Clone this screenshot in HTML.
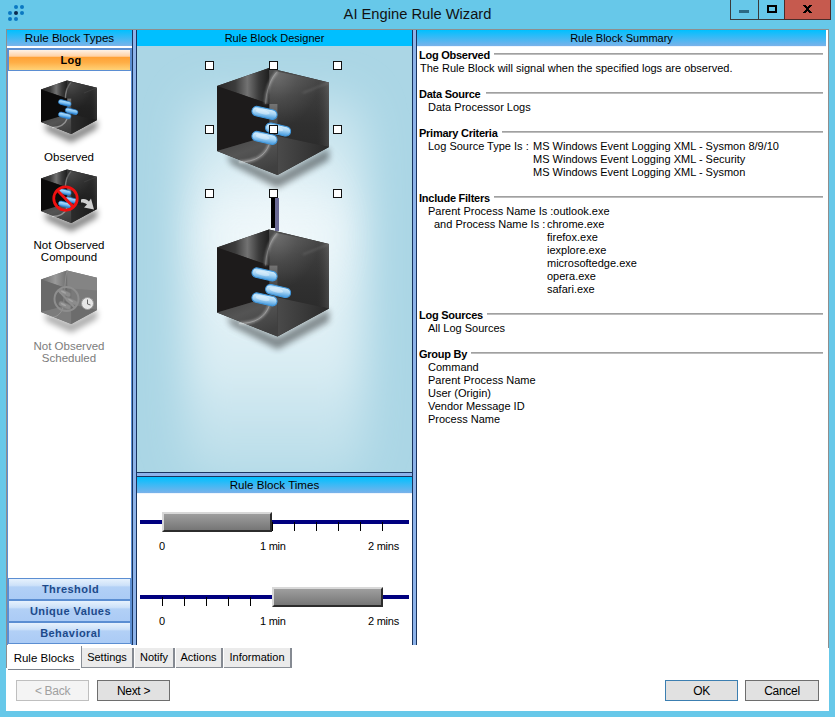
<!DOCTYPE html>
<html><head><meta charset="utf-8">
<style>
*{margin:0;padding:0;box-sizing:border-box}
html,body{width:835px;height:717px;overflow:hidden}
body{position:relative;background:#67c8e9;font-family:"Liberation Sans",sans-serif;color:#000}
.a{position:absolute}
.dot{position:absolute;width:4px;height:4px;border-radius:50%;background:#0a78c2}
#title{left:0;width:835px;top:5px;text-align:center;font-size:14.7px;color:#111;line-height:18px;padding-left:0px}
.cap{position:absolute;top:-1px;height:21px;border:1px solid #3a3a3a}
#client{left:6px;top:29px;width:823px;height:682px;background:#fff}
.hdr{position:absolute;height:16px;font-size:11px;line-height:16px;text-align:center;color:#000;background:linear-gradient(#00c0ff,#7ab2ea)}
.split{position:absolute;background:#8db3ea}
.bbtn{position:absolute;left:8px;width:123px;height:22px;border:1px solid #5b8ed2;background:linear-gradient(#e6f1fd 0%,#cde1f9 32%,#b2d0f6 40%,#abcbf5 100%);font-weight:bold;font-size:11px;line-height:20px;text-align:center;color:#1d4a8a;letter-spacing:0.45px;padding-left:2px}
.lbl{position:absolute;width:124px;left:7px;text-align:center;font-size:11.5px;line-height:12.3px;color:#000}
.hdl{position:absolute;width:9px;height:9px;border:1.5px solid #111;background:#fff}
.sum{position:absolute;left:420px;font-size:11px;line-height:13px;white-space:pre;color:#000}
.sh{position:absolute;left:419px;font-size:11px;line-height:13px;font-weight:bold;letter-spacing:-0.25px;white-space:pre}
.rule{position:absolute;height:2px;border-top:1px solid #a0a0a0;border-bottom:1px solid #bdbdbd}
.tab{position:absolute;top:648px;height:20px;background:#ebebeb;font-size:11px;line-height:19px;text-align:center;border-right:2px solid #858a92;border-bottom:1px solid #8a8f96}
.btn{position:absolute;top:680px;height:21px;font-size:12px;line-height:20px;text-align:center;background:#e1e1e1;border:1px solid #6e6e6e;letter-spacing:-0.3px}
.tl{position:absolute;font-size:11px;line-height:13px;color:#000;letter-spacing:-0.25px}
.nav{position:absolute;left:140px;width:269px;height:4px;background:#00007f}
.tick{position:absolute;width:1px;background:#000}
.gbar{position:absolute;height:20px;background:linear-gradient(#9e9e9e,#767676);border-top:2px solid #d8d8d8;border-left:2px solid #d8d8d8;border-bottom:2px solid #2c2c2c;border-right:2px solid #2c2c2c}
</style></head><body>
<!-- title bar icon -->
<div class="dot" style="left:14px;top:5px"></div>
<div class="dot" style="left:20px;top:5px"></div>
<div class="dot" style="left:8px;top:11px"></div>
<div class="dot" style="left:14px;top:11px;background:#0c2a4c"></div>
<div class="dot" style="left:20px;top:11px"></div>
<div class="dot" style="left:8px;top:17px"></div>
<div class="dot" style="left:14px;top:17px"></div>
<div id="title" class="a">AI Engine Rule Wizard</div>
<div class="cap" style="left:730px;width:29px"><div class="a" style="left:8px;top:10px;width:10px;height:3px;background:#2c6a84"></div></div>
<div class="cap" style="left:758px;width:27px"><div class="a" style="left:8px;top:5px;width:10px;height:8px;border:2px solid #000"></div></div>
<div class="cap" style="left:784px;width:47px;background:#c65a4e;border-color:#4a2c2a"></div>
<svg class="a" style="left:803px;top:5px" width="9" height="8" shape-rendering="crispEdges" fill="#000"><rect x="0" y="0" width="3" height="1"/><rect x="6" y="0" width="3" height="1"/><rect x="1" y="1" width="3" height="1"/><rect x="5" y="1" width="3" height="1"/><rect x="2" y="2" width="5" height="1"/><rect x="3" y="3" width="3" height="1"/><rect x="3" y="4" width="3" height="1"/><rect x="2" y="5" width="5" height="1"/><rect x="1" y="6" width="3" height="1"/><rect x="5" y="6" width="3" height="1"/><rect x="0" y="7" width="3" height="1"/><rect x="6" y="7" width="3" height="1"/></svg>

<div id="client" class="a"></div>
<!-- tab page border -->
<div class="a" style="left:6px;top:29px;width:823px;height:1px;background:#8e8e8e"></div>
<div class="a" style="left:6px;top:29px;width:1px;height:639px;background:#8e8e8e"></div>
<div class="a" style="left:828px;top:29px;width:1px;height:619px;background:#8e8e8e"></div>

<!-- LEFT PANEL -->
<div class="hdr" style="left:7px;top:30px;width:125px;font-size:11.6px">Rule Block Types</div>
<div class="a" style="left:7px;top:48px;width:125px;height:597px;border:1px solid #5b8ed2;border-bottom:none;background:#fff"></div>
<div class="a" style="left:8px;top:49px;width:123px;height:22px;border:1px solid #5b8ed2;background:linear-gradient(#fff3e6 0%,#ffd2a6 31%,#ffa236 37%,#ffae46 62%,#ffd277 100%);font-weight:bold;font-size:11px;line-height:20px;text-align:center;padding-left:3px;letter-spacing:0.3px">Log</div>
<div class="lbl" style="top:151px">Observed</div>
<div class="lbl" style="top:239px">Not Observed<br>Compound</div>
<div class="lbl" style="top:340px;color:#7c7c7c">Not Observed<br>Scheduled</div>
<div class="bbtn" style="top:578px">Threshold</div>
<div class="bbtn" style="top:600px">Unique Values</div>
<div class="bbtn" style="top:622px">Behavioral</div>

<!-- splitter left -->
<div class="split" style="left:132px;top:30px;width:5px;height:615px;border-left:1px solid #1a3560;border-right:1px solid #1a3560"></div>

<!-- DESIGNER -->
<svg class="a" style="left:137px;top:46px" width="275" height="426"><defs><filter id="bgblur" x="-50%" y="-50%" width="200%" height="200%"><feGaussianBlur stdDeviation="28"/></filter><filter id="bgblur2" x="-50%" y="-50%" width="200%" height="200%"><feGaussianBlur stdDeviation="20"/></filter></defs>
<rect width="275" height="426" fill="#abd6e5"/>
<linearGradient id="glowG" x1="0" y1="0" x2="0" y2="1"><stop offset="0" stop-color="#eaf5f9" stop-opacity="0.3"/><stop offset="0.35" stop-color="#eef7fa" stop-opacity="0.95"/><stop offset="0.7" stop-color="#e6f3f7" stop-opacity="0.8"/><stop offset="1" stop-color="#d4eaf1" stop-opacity="0.3"/></linearGradient>
<rect x="48" y="45" width="180" height="390" rx="30" fill="url(#glowG)" filter="url(#bgblur2)"/>
<ellipse cx="136" cy="190" rx="50" ry="70" fill="#fff" opacity="0.35" filter="url(#bgblur)"/>
</svg>
<div class="hdr" style="left:137px;top:30px;width:275px;background:#00bfff">Rule Block Designer</div>
<div class="split" style="left:137px;top:472px;width:275px;height:5px;border-top:1px solid #1a3560;border-bottom:1px solid #1a3560"></div>
<div class="hdr" style="left:137px;top:477px;width:275px;font-size:11.6px">Rule Block Times</div>

<svg class="a" style="left:0;top:0" width="835" height="717" viewBox="0 0 835 717">
<defs>
<linearGradient id="gRoofL" x1="0" y1="0" x2="1" y2="0">
 <stop offset="0" stop-color="#2a2828"/><stop offset="0.35" stop-color="#3c3c3c"/><stop offset="0.58" stop-color="#727272"/><stop offset="0.8" stop-color="#3a3a3a"/><stop offset="1" stop-color="#1e1e1e"/>
</linearGradient>
<linearGradient id="gRight" x1="0" y1="0" x2="0" y2="1">
 <stop offset="0" stop-color="#4e4e4e"/><stop offset="0.35" stop-color="#3c3c3c"/><stop offset="0.7" stop-color="#303030"/><stop offset="1" stop-color="#2c2c2c"/>
</linearGradient>
<linearGradient id="gRightH" x1="0" y1="0" x2="1" y2="0">
 <stop offset="0" stop-color="#000" stop-opacity="0"/><stop offset="0.75" stop-color="#000" stop-opacity="0"/><stop offset="1" stop-color="#fff" stop-opacity="0.12"/>
</linearGradient>
<linearGradient id="gBand" x1="0" y1="0" x2="0" y2="1">
 <stop offset="0" stop-color="#747474"/><stop offset="0.5" stop-color="#505050"/><stop offset="1" stop-color="#3a3a3a"/>
</linearGradient>
<linearGradient id="gFloorL" x1="0" y1="0" x2="0.6" y2="1">
 <stop offset="0" stop-color="#404040"/><stop offset="0.5" stop-color="#545454"/><stop offset="1" stop-color="#404040"/>
</linearGradient>
<linearGradient id="gFloorR" x1="0" y1="0" x2="1" y2="0">
 <stop offset="0" stop-color="#4a4a4a"/><stop offset="1" stop-color="#2a2a2a"/>
</linearGradient>
<linearGradient id="gPill" x1="0" y1="0" x2="0" y2="1">
 <stop offset="0" stop-color="#c2e2fa"/><stop offset="0.45" stop-color="#8cc6f2"/><stop offset="1" stop-color="#3b93dc"/>
</linearGradient>
<radialGradient id="gShadow" cx="0.5" cy="0.5" r="0.5">
 <stop offset="0" stop-color="#000" stop-opacity="0.45"/><stop offset="0.6" stop-color="#000" stop-opacity="0.2"/><stop offset="1" stop-color="#000" stop-opacity="0"/>
</radialGradient>
<filter id="gray"><feColorMatrix type="matrix" values="0.33 0.33 0.33 0 0.28  0.33 0.33 0.33 0 0.28  0.33 0.33 0.33 0 0.28  0 0 0 1 0"/></filter>
<filter id="blur3" x="-30%" y="-30%" width="160%" height="160%"><feGaussianBlur stdDeviation="3"/></filter>
<filter id="blur1" x="-30%" y="-30%" width="160%" height="160%"><feGaussianBlur stdDeviation="1"/></filter>
<linearGradient id="gTopHi" x1="0" y1="0" x2="0" y2="1">
 <stop offset="0" stop-color="#fff" stop-opacity="0.16"/><stop offset="0.45" stop-color="#fff" stop-opacity="0.03"/><stop offset="1" stop-color="#fff" stop-opacity="0"/>
</linearGradient>
<linearGradient id="gPill2" x1="0" y1="0" x2="0" y2="1">
 <stop offset="0" stop-color="#d2ebfc"/><stop offset="0.5" stop-color="#9ccff4"/><stop offset="1" stop-color="#4a9fe0"/>
</linearGradient>
<linearGradient id="gRoofR" x1="0" y1="0" x2="1" y2="0.3">
 <stop offset="0" stop-color="#505050"/><stop offset="0.5" stop-color="#434343"/><stop offset="1" stop-color="#4c4c4c"/>
</linearGradient>
<linearGradient id="gWallR" x1="0" y1="0" x2="1" y2="0">
 <stop offset="0" stop-color="#3c3c3c"/><stop offset="0.6" stop-color="#303030"/><stop offset="1" stop-color="#383838"/>
</linearGradient>
<filter id="blur6" x="-50%" y="-50%" width="200%" height="200%"><feGaussianBlur stdDeviation="6"/></filter>
<g id="shBig"><polygon points="10,86 60.5,108 112,80 112,92 60.5,120 14,96" fill="#000" opacity="0.42" filter="url(#blur3)"/></g>
<g id="shSmall"><polygon points="8,84 60.5,106 112,78 112,96 60.5,124 10,100" fill="#000" opacity="0.5" filter="url(#blur6)"/></g>
<linearGradient id="gPillS" x1="0" y1="0" x2="0.25" y2="1">
 <stop offset="0" stop-color="#3f95e0"/><stop offset="0.3" stop-color="#a8d8f8"/><stop offset="0.65" stop-color="#78bcf0"/><stop offset="1" stop-color="#2f88d8"/>
</linearGradient>
<g id="pillS"><rect x="-12.75" y="-4.75" width="25.5" height="9.5" rx="4.75" fill="url(#gPillS)" stroke="#2f88d8" stroke-width="1.2"/></g>
<g id="pillsS">
 <use href="#pillS" transform="translate(47.5,44.9) rotate(15)"/>
 <use href="#pillS" transform="translate(61.1,61.5) rotate(15)"/>
 <use href="#pillS" transform="translate(47.5,69.9) rotate(15)"/>
</g>
<radialGradient id="gSheen" cx="0.15" cy="0.05" r="0.7"><stop offset="0" stop-color="#fff" stop-opacity="0.2"/><stop offset="0.5" stop-color="#fff" stop-opacity="0.08"/><stop offset="1" stop-color="#fff" stop-opacity="0"/></radialGradient>
<g id="cube">
 <polygon points="52,0 112,14.5 112,79 60.5,107 0,83 0,18" fill="#2a2828"/>
 <polygon points="52,0 112,14.5 112,79 60.5,68 60.5,36 52.4,36" fill="url(#gRight)"/>
 <polygon points="52,0 112,14.5 112,79 60.5,68 60.5,36 52.4,36" fill="url(#gRightH)"/>
 <polygon points="52,0 0,18 52.4,36" fill="url(#gRoofL)"/>
 <polygon points="0,18 52.4,36 52.4,67.5 0,83" fill="#1d1b1b"/>
 <polygon points="52.4,36 60.5,36 60.5,68 52.4,67.5" fill="url(#gBand)"/>
 <polygon points="0,83 52.4,67.5 60.5,68 60.5,107" fill="url(#gFloorL)"/>
 <polygon points="60.5,68 112,79 60.5,107" fill="url(#gFloorR)"/>
 <path d="M112,14.5 L86,25" stroke="#fff" stroke-opacity="0.18" stroke-width="1.2" filter="url(#blur1)"/>
 <path d="M60,3.5 C54,10 49,22 48.5,36 L60.5,36 L60.5,68 L112,79 L112,14.5 Z" fill="url(#gSheen)"/>
 <path d="M60,3.5 C54,10 49,22 48.5,36" fill="none" stroke="#fff" stroke-opacity="0.3" stroke-width="3" filter="url(#blur1)"/>
 <path d="M60,3.5 C54,10 49,22 48.5,36" fill="none" stroke="#fff" stroke-opacity="0.22" stroke-width="0.8"/>
 <path d="M52.4,76 C48,88 38,94 22,94" fill="none" stroke="#fff" stroke-opacity="0.32" stroke-width="3" filter="url(#blur1)"/>
 <path d="M52.4,76 C48,88 38,94 22,94" fill="none" stroke="#fff" stroke-opacity="0.3" stroke-width="0.8"/>
</g>
<linearGradient id="gPill3" x1="0" y1="0" x2="0.25" y2="1">
 <stop offset="0" stop-color="#5aaae6"/><stop offset="0.25" stop-color="#cde9fb"/><stop offset="0.6" stop-color="#a6d4f4"/><stop offset="1" stop-color="#5aa6e2"/>
</linearGradient>
<g id="darken">
 <polygon points="0,18 52.4,36 52.4,67.5 0,83" fill="#000" opacity="0.6"/>
 <polygon points="52,0 112,14.5 112,79 60.5,68 60.5,36 52.4,36" fill="#000" opacity="0.3"/>
 <polygon points="60.5,68 112,79 60.5,107" fill="#000" opacity="0.4"/>
</g>
<linearGradient id="gRoofG" x1="0" y1="0" x2="1" y2="0"><stop offset="0" stop-color="#6a6a6a"/><stop offset="0.55" stop-color="#9a9a9a"/><stop offset="1" stop-color="#6e6e6e"/></linearGradient>
<g id="pillG"><rect x="-12.75" y="-4.75" width="25.5" height="9.5" rx="4.75" fill="#8c8c8c" stroke="#7a7a7a" stroke-width="1"/><ellipse cx="-3" cy="-0.5" rx="6" ry="2" fill="#fff" opacity="0.2"/></g>
<g id="pill"><rect x="-12.75" y="-4.75" width="25.5" height="9.5" rx="4.75" fill="url(#gPill3)" stroke="#4097dc" stroke-width="1"/><ellipse cx="-2" cy="-0.5" rx="7" ry="2.2" fill="#fff" opacity="0.35"/></g>
<g id="pills">
 <use href="#pill" transform="translate(47.5,44.9) rotate(13)"/>
 <use href="#pill" transform="translate(61.1,61.5) rotate(13)"/>
 <use href="#pill" transform="translate(47.5,69.9) rotate(13)"/>
</g>
</defs>
<!-- designer cubes -->
<g transform="translate(217,68)"><use href="#shBig"/><use href="#cube"/><use href="#pills"/></g>
<g transform="translate(217,229.5)"><use href="#shBig"/><use href="#cube"/><use href="#pills"/></g>
<rect x="271" y="198" width="4" height="30" fill="#000"/>
<rect x="275" y="198" width="4" height="33" fill="#6a6a94"/>
<!-- left panel cubes -->
<g transform="translate(41,80.5) scale(0.5)"><use href="#shSmall"/><use href="#cube"/><use href="#darken"/><use href="#pillsS"/></g>
<g transform="translate(41,169.5) scale(0.5)"><use href="#shSmall"/><use href="#cube"/><use href="#darken"/><use href="#pillsS"/>
 <circle cx="49" cy="58" r="23.5" fill="none" stroke="#f01010" stroke-width="5.5"/>
 <line x1="32" y1="41" x2="66" y2="76" stroke="#f01010" stroke-width="5.5"/>
 <path d="M80,60 C88,58 92,60 96,64 L100,58 L106,80 L86,76 L92,70 C88,67 85,66 80,66 Z" fill="#cfcfcf"/>
</g>
<g transform="translate(41,270.5) scale(0.5)">
 <polygon points="8,84 60.5,106 112,78 112,96 60.5,124 10,100" fill="#000" opacity="0.35" filter="url(#blur6)"/>
 <polygon points="52,0 112,14.5 112,79 60.5,107 0,83 0,18" fill="#727272"/>
 <polygon points="52,0 112,14.5 112,79 60.5,68 60.5,36 52.4,36" fill="#7a7a7a"/>
 <polygon points="52,0 112,14.5 112,40 60.5,36 52.4,36" fill="#fff" opacity="0.08"/>
 <polygon points="52,0 0,18 52.4,36" fill="url(#gRoofG)"/>
 <polygon points="0,18 52.4,36 52.4,70 0,83" fill="#6a6a6a"/>
 <polygon points="0,83 52.4,70 60.5,68 60.5,107" fill="#7c7c7c"/>
 <polygon points="60.5,68 112,79 60.5,107" fill="#6c6c6c"/>
 <path d="M52,1 C47,20 47,60 44,74 C40,88 30,94 18,94" fill="none" stroke="#fff" stroke-opacity="0.3" stroke-width="1.2"/>
 <g opacity="1"><use href="#pillG" transform="translate(47.5,44.9) rotate(25)"/><use href="#pillG" transform="translate(61.1,61.5) rotate(25)"/><use href="#pillG" transform="translate(47.5,69.9) rotate(25)"/></g>
 <circle cx="51" cy="57" r="24" fill="none" stroke="#8e8e8e" stroke-width="4"/>
 <line x1="35" y1="40" x2="68" y2="75" stroke="#8e8e8e" stroke-width="4"/>
 <circle cx="93" cy="66" r="12" fill="#e6e6e6" stroke="#9a9a9a" stroke-width="2"/>
 <path d="M93,58 L93,67 L99,69" stroke="#444" stroke-width="1.6" fill="none"/>
</g>
<!-- handles -->
<g fill="#fff" stroke="#111" stroke-width="1">
 <rect x="205.5" y="61.5" width="8" height="8"/><rect x="269.5" y="61.5" width="8" height="8"/><rect x="333.5" y="61.5" width="8" height="8"/>
 <rect x="205.5" y="125.5" width="8" height="8"/><rect x="269.5" y="125.5" width="8" height="8"/><rect x="333.5" y="125.5" width="8" height="8"/>
 <rect x="205.5" y="189.5" width="8" height="8"/><rect x="269.5" y="189.5" width="8" height="8"/><rect x="333.5" y="189.5" width="8" height="8"/>
</g>
</svg>

<!-- TIMES -->
<div class="nav" style="top:520px"></div>
<div class="tick" style="left:272px;top:522px;height:9px"></div><div class="tick" style="left:294px;top:522px;height:9px"></div><div class="tick" style="left:316px;top:522px;height:9px"></div><div class="tick" style="left:338px;top:522px;height:9px"></div><div class="tick" style="left:360px;top:522px;height:9px"></div><div class="tick" style="left:382px;top:522px;height:9px"></div><div class="gbar" style="left:162px;top:512px;width:110px"></div>
<div class="tl" style="left:159px;top:540px">0</div>
<div class="tl" style="left:260px;top:540px">1 min</div>
<div class="tl" style="left:368px;top:540px">2 mins</div>

<div class="nav" style="top:595px"></div>
<div class="tick" style="left:162px;top:597px;height:9px"></div><div class="tick" style="left:184px;top:597px;height:9px"></div><div class="tick" style="left:206px;top:597px;height:9px"></div><div class="tick" style="left:228px;top:597px;height:9px"></div><div class="tick" style="left:250px;top:597px;height:9px"></div><div class="gbar" style="left:272px;top:587px;width:111px"></div>
<div class="tl" style="left:159px;top:615px">0</div>
<div class="tl" style="left:260px;top:615px">1 min</div>
<div class="tl" style="left:368px;top:615px">2 mins</div>

<!-- splitter right -->
<div class="split" style="left:412px;top:30px;width:5px;height:615px;border-left:1px solid #1a3560;border-right:1px solid #1a3560"></div>

<!-- SUMMARY -->
<div class="hdr" style="left:417px;top:30px;width:409px">Rule Block Summary</div>
<div class="a" style="left:826px;top:30px;width:2px;height:617px;background:#fff"></div>
<div class="a" style="left:417px;top:46px;width:409px;height:1px;background:#eef5fd"></div>
<div class="a" style="left:137px;top:493px;width:275px;height:1px;background:#eef5fd"></div>

<div class="sh" style="top:49px">Log Observed</div>
<div class="rule" style="left:494px;top:53px;width:329px"></div>
<div class="sum" style="left:420px;top:62px">The Rule Block will signal when the specified logs are observed.</div>
<div class="sh" style="top:88px">Data Source</div>
<div class="rule" style="left:486px;top:92px;width:337px"></div>
<div class="sum" style="left:428px;top:101px">Data Processor Logs</div>
<div class="sh" style="top:127px">Primary Criteria</div>
<div class="rule" style="left:502px;top:131px;width:321px"></div>
<div class="sum" style="left:428px;top:140px">Log Source Type Is : </div>
<div class="sum" style="left:533px;top:140px">MS Windows Event Logging XML - Sysmon 8/9/10</div>
<div class="sum" style="left:533px;top:153px">MS Windows Event Logging XML - Security</div>
<div class="sum" style="left:533px;top:166px">MS Windows Event Logging XML - Sysmon</div>
<div class="sh" style="top:192px">Include Filters</div>
<div class="rule" style="left:494px;top:196px;width:329px"></div>
<div class="sum" style="left:428px;top:205px">Parent Process Name Is :outlook.exe</div>
<div class="sum" style="left:434px;top:218px">and Process Name Is :</div>
<div class="sum" style="left:547px;top:218px">chrome.exe</div>
<div class="sum" style="left:547px;top:231px">firefox.exe</div>
<div class="sum" style="left:547px;top:244px">iexplore.exe</div>
<div class="sum" style="left:547px;top:257px">microsoftedge.exe</div>
<div class="sum" style="left:547px;top:270px">opera.exe</div>
<div class="sum" style="left:547px;top:283px">safari.exe</div>
<div class="sh" style="top:309px">Log Sources</div>
<div class="rule" style="left:487px;top:313px;width:336px"></div>
<div class="sum" style="left:428px;top:322px">All Log Sources</div>
<div class="sh" style="top:348px">Group By</div>
<div class="rule" style="left:471px;top:352px;width:352px"></div>
<div class="sum" style="left:428px;top:361px">Command</div>
<div class="sum" style="left:428px;top:374px">Parent Process Name</div>
<div class="sum" style="left:428px;top:387px">User (Origin)</div>
<div class="sum" style="left:428px;top:400px">Vendor Message ID</div>
<div class="sum" style="left:428px;top:413px">Process Name</div>
<!-- TABS -->
<div class="a" style="left:7px;top:646px;width:74px;height:23px;background:#fff;font-size:11.5px;line-height:25px;text-align:center;padding-left:0px">Rule Blocks</div>
<div class="a" style="left:8px;top:669px;width:72px;height:1px;background:#7f858e"></div>
<div class="a" style="left:81px;top:646px;width:1px;height:22px;background:#8a8f96"></div>
<div class="tab" style="left:82px;width:52px">Settings</div>
<div class="tab" style="left:135px;width:40px">Notify</div>
<div class="tab" style="left:176px;width:47px">Actions</div>
<div class="tab" style="left:224px;width:68px">Information</div>

<!-- BUTTONS -->
<div class="btn" style="left:16px;width:73px;background:#f4f4f4;border-color:#bfbfbf;color:#a0a0a0">&lt; Back</div>
<div class="btn" style="left:97px;width:73px">Next &gt;</div>
<div class="btn" style="left:665px;width:73px;border-color:#3c7fb1">OK</div>
<div class="btn" style="left:745px;width:74px">Cancel</div>
</body></html>
